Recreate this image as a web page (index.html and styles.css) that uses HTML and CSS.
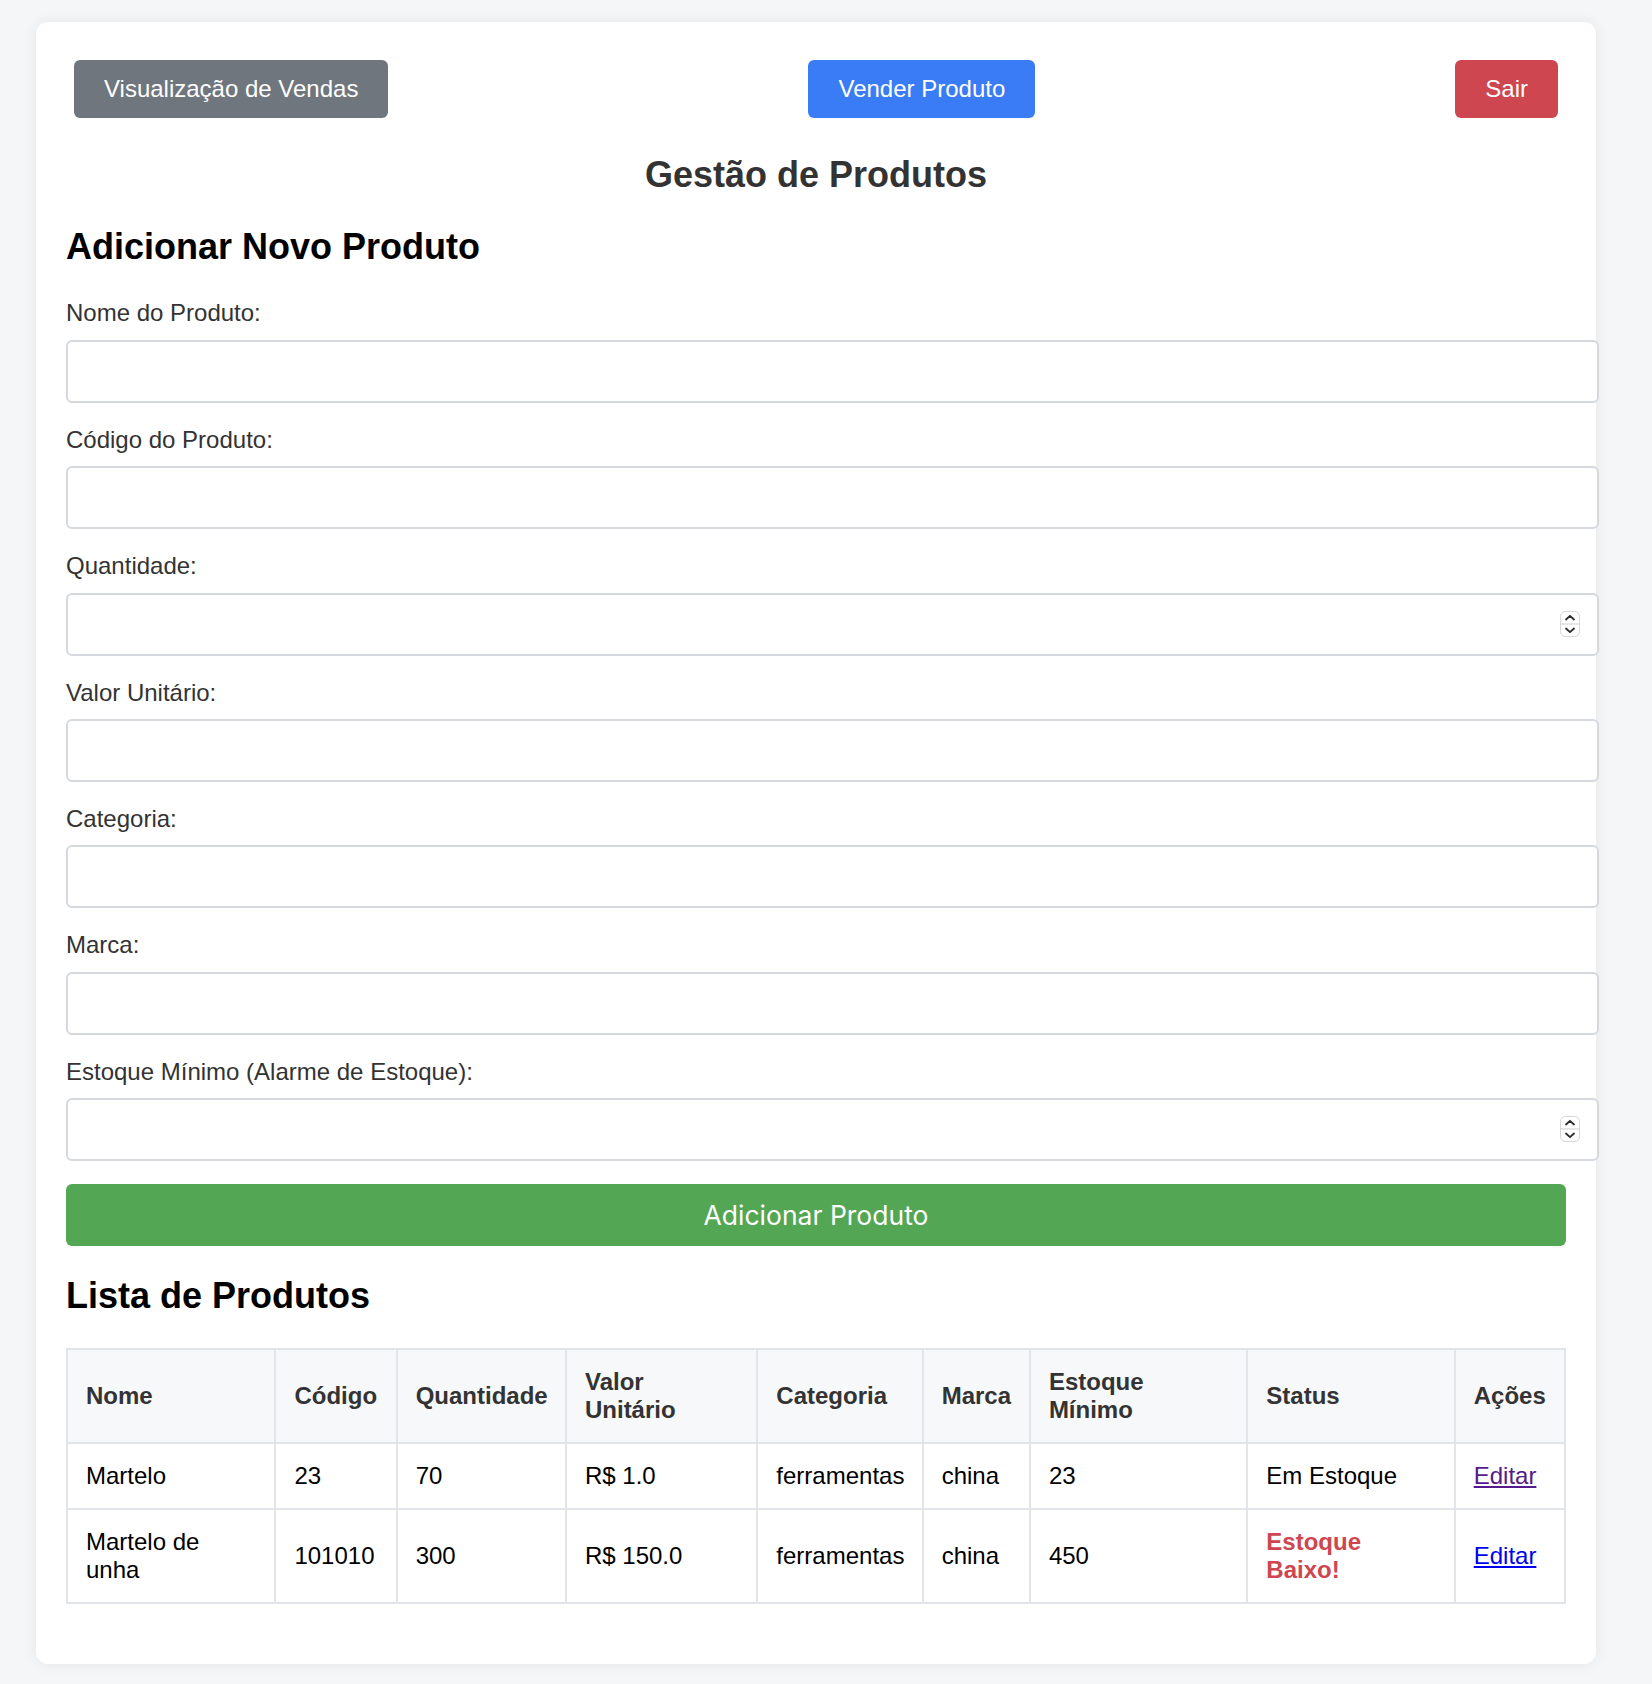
FILE: index.html
```html
<!DOCTYPE html>
<html lang="pt-BR">
<head>
<meta charset="utf-8">
<title>Gestão de Produtos</title>
<link rel="stylesheet" href="styles.css">
</head>
<body>
<div class="container">
  <nav class="nav">
    <button class="nav-btn btn-gray" type="button">Visualização de Vendas</button>
    <button class="nav-btn btn-blue" type="button">Vender Produto</button>
    <button class="nav-btn btn-red" type="button">Sair</button>
  </nav>

  <h1 class="page-title">Gestão de Produtos</h1>

  <h2 class="section-title">Adicionar Novo Produto</h2>
  <form class="form">
    <label class="label" for="nome">Nome do Produto:</label>
    <input class="input" id="nome" type="text">

    <label class="label" for="codigo">Código do Produto:</label>
    <input class="input" id="codigo" type="text">

    <label class="label" for="quantidade">Quantidade:</label>
    <div class="num-field">
      <input class="input" id="quantidade" type="number">
      <svg class="spin" width="20" height="26" viewBox="0 0 20 26" aria-hidden="true">
        <rect x="0.5" y="0.5" width="19" height="25" rx="5" fill="#fff" stroke="#d6d6d6"/>
        <line x1="1" y1="13" x2="19" y2="13" stroke="#dedede" stroke-width="1.5"/>
        <path d="M6 8.5 L10 4.8 L14 8.5" fill="none" stroke="#2b2b2b" stroke-width="1.8" stroke-linecap="round" stroke-linejoin="round"/>
        <path d="M6 17.5 L10 21.2 L14 17.5" fill="none" stroke="#2b2b2b" stroke-width="1.8" stroke-linecap="round" stroke-linejoin="round"/>
      </svg>
    </div>

    <label class="label" for="valor">Valor Unitário:</label>
    <input class="input" id="valor" type="text">

    <label class="label" for="categoria">Categoria:</label>
    <input class="input" id="categoria" type="text">

    <label class="label" for="marca">Marca:</label>
    <input class="input" id="marca" type="text">

    <label class="label" for="minimo">Estoque Mínimo (Alarme de Estoque):</label>
    <div class="num-field">
      <input class="input" id="minimo" type="number">
      <svg class="spin" width="20" height="26" viewBox="0 0 20 26" aria-hidden="true">
        <rect x="0.5" y="0.5" width="19" height="25" rx="5" fill="#fff" stroke="#d6d6d6"/>
        <line x1="1" y1="13" x2="19" y2="13" stroke="#dedede" stroke-width="1.5"/>
        <path d="M6 8.5 L10 4.8 L14 8.5" fill="none" stroke="#2b2b2b" stroke-width="1.8" stroke-linecap="round" stroke-linejoin="round"/>
        <path d="M6 17.5 L10 21.2 L14 17.5" fill="none" stroke="#2b2b2b" stroke-width="1.8" stroke-linecap="round" stroke-linejoin="round"/>
      </svg>
    </div>

    <button class="btn-submit" type="button">Adicionar Produto</button>
  </form>

  <h2 class="section-title list-title">Lista de Produtos</h2>
  <table class="table">
    <colgroup>
      <col class="c-nome"><col class="c-codigo"><col class="c-qtd"><col class="c-valor"><col class="c-cat"><col class="c-marca"><col class="c-min"><col class="c-status"><col class="c-acoes">
    </colgroup>
    <thead>
      <tr>
        <th>Nome</th><th>Código</th><th>Quantidade</th><th>Valor Unitário</th><th>Categoria</th><th>Marca</th><th>Estoque Mínimo</th><th>Status</th><th>Ações</th>
      </tr>
    </thead>
    <tbody>
      <tr>
        <td>Martelo</td><td>23</td><td>70</td><td>R$ 1.0</td><td>ferramentas</td><td>china</td><td>23</td><td>Em Estoque</td><td><a class="link visited" href="#">Editar</a></td>
      </tr>
      <tr>
        <td>Martelo de unha</td><td>101010</td><td>300</td><td>R$ 150.0</td><td>ferramentas</td><td>china</td><td>450</td><td><span class="low">Estoque Baixo!</span></td><td><a class="link" href="#">Editar</a></td>
      </tr>
    </tbody>
  </table>
</div>
</body>
</html>
```
FILE: styles.css
```css
html, body {
  margin: 0;
}

body {
  background: #f5f6f8;
  font-family: "Liberation Sans", Arial, Helvetica, sans-serif;
  font-size: 24px;
  color: #000;
  padding: 22px 56px 21px 36px;
}

.container {
  background: #fff;
  border-radius: 12px;
  box-shadow: 0 0 15px rgba(0, 0, 0, 0.07);
  padding: 30px;
}

/* top navigation */
.nav {
  display: flex;
  justify-content: space-between;
  align-items: center;
}

.nav-btn {
  margin: 8px;
  padding: 15px 30px;
  border: none;
  border-radius: 6px;
  color: #fff;
  font-family: "Liberation Sans", Arial, sans-serif;
  font-size: 24px;
  line-height: 28px;
  cursor: pointer;
}

.btn-gray { background: #6f767e; }
.btn-blue { background: #3a7cf6; }
.btn-red  { background: #cd4650; }

/* headings */
.page-title {
  margin: 27.5px 0 31px;
  text-align: center;
  color: #333;
  font-size: 36px;
  line-height: 41.4px;
  font-weight: bold;
}

.section-title {
  margin: 0 0 32px;
  font-size: 36px;
  line-height: 41.4px;
  font-weight: bold;
  color: #000;
}

.list-title {
  margin: 29px 0 31.5px;
}

/* form */
.form {
  margin: 0;
}

.label {
  display: block;
  color: #333;
  line-height: 28.4px;
  margin-bottom: 12px;
}

.input {
  display: block;
  box-sizing: content-box;
  width: 100%;
  height: 29px;
  margin: 0 0 23px;
  padding: 15px 14px 15px 15px;
  border: 2px solid #d5d8dc;
  border-radius: 6px;
  background: #fff;
  font-family: "Liberation Sans", Arial, sans-serif;
  font-size: 24px;
  outline: none;
}

.input[type="number"] {
  -moz-appearance: textfield;
  appearance: textfield;
}

.input::-webkit-inner-spin-button,
.input::-webkit-outer-spin-button {
  -webkit-appearance: none;
  margin: 0;
}

.num-field {
  position: relative;
}

.spin {
  position: absolute;
  top: 18px;
  right: -14px;
  display: block;
  filter: drop-shadow(0 0.5px 0.5px rgba(0, 0, 0, 0.08));
}

.btn-submit {
  display: block;
  width: 100%;
  height: 62px;
  margin: 0;
  padding: 15px;
  border: none;
  border-radius: 6px;
  background: #53a653;
  color: #fff;
  font-family: Inter, "Liberation Sans", sans-serif;
  font-size: 26.5px;
  line-height: 32px;
  cursor: pointer;
}

/* table */
.table {
  width: 100%;
  table-layout: fixed;
  border-collapse: collapse;
  margin: 0 0 30px;
}

.c-nome   { width: 208px; }
.c-codigo { width: 121px; }
.c-qtd    { width: 169px; }
.c-valor  { width: 191px; }
.c-cat    { width: 165px; }
.c-marca  { width: 107px; }
.c-min    { width: 217px; }
.c-status { width: 207px; }
.c-acoes  { width: 110px; }

.table th,
.table td {
  border: 2px solid #e1e4e8;
  padding: 18px;
  text-align: left;
  vertical-align: middle;
  line-height: 28px;
  font-size: 24px;
}

.table th {
  background: #f7f8fa;
  color: #333;
  font-weight: bold;
}

.table td {
  color: #000;
}

.low {
  color: #cd4650;
  font-weight: bold;
}

.link {
  color: #0000ee;
  text-decoration: underline;
}

.link.visited {
  color: #551a8b;
}
```
